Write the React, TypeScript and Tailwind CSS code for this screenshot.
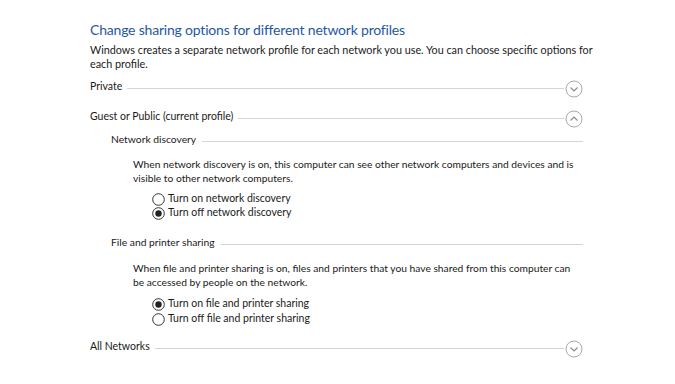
import React from "react";

const font = { fontFamily: 'Lato, "Noto Sans", sans-serif' };

function Chevron({ up }: { up?: boolean }) {
  return (
    <svg width="18" height="18" viewBox="0 0 18 18" className="shrink-0 mt-[3px]">
      <circle cx="9" cy="9" r="8" fill="none" stroke="#a8a8a8" strokeWidth="1" />
      {up ? (
        <path d="M5.5 10.5 L9 7 L12.5 10.5" fill="none" stroke="#8a8a8a" strokeWidth="1.1" />
      ) : (
        <path d="M5.5 7.5 L9 11 L12.5 7.5" fill="none" stroke="#8a8a8a" strokeWidth="1.1" />
      )}
    </svg>
  );
}

function SectionHeader({ label, up }: { label: string; up?: boolean }) {
  return (
    <div className="flex items-center h-[18px]">
      <span className="text-[10.5px] text-[#1a1a1a] whitespace-nowrap">{label}</span>
      <div className="flex-1 h-px bg-[#d4d4d4] ml-[5px] mr-[1px] mt-[3px]" />
      <Chevron up={up} />
    </div>
  );
}

function SubHeader({ label }: { label: string }) {
  return (
    <div className="flex items-center h-[16px]">
      <span className="text-[10.3px] text-[#1a1a1a] whitespace-nowrap">{label}</span>
      <div className="flex-1 h-px bg-[#d4d4d4] ml-[6px] mt-[3px]" />
    </div>
  );
}

function Radio({ checked, label }: { checked?: boolean; label: string }) {
  return (
    <div className="flex items-center h-[14px] gap-[3px]">
      <svg width="13" height="13" viewBox="0 0 13 13" className="shrink-0">
        <circle cx="6.5" cy="6.5" r="5.8" fill="#fff" stroke="#333" strokeWidth="1" />
        {checked && <circle cx="6.5" cy="6.5" r="3.2" fill="#222" />}
      </svg>
      <span className="text-[10.5px] text-[#1a1a1a]">{label}</span>
    </div>
  );
}

export default function App() {
  return (
    <div className="w-[675px] h-[384px] bg-white overflow-hidden" style={font}>
      <div className="pl-[90px] pr-[92px] pt-[20px]">
        <div className="text-[14px] tracking-[-0.2px] text-[#1e58a6] leading-[20px] whitespace-nowrap">
          Change sharing options for different network profiles
        </div>
        <div className="mt-[3px] text-[10.8px] leading-[14px] text-[#1a1a1a] whitespace-nowrap">
          Windows creates a separate network profile for each network you use. You can choose specific options for
          <br />
          each profile.
        </div>
        <div className="mt-[7px]">
          <SectionHeader label="Private" />
        </div>
        <div className="mt-[12px]">
          <SectionHeader label="Guest or Public (current profile)" up />
        </div>
        <div className="pl-[21px] mt-[6px]">
          <SubHeader label="Network discovery" />
          <div className="pl-[22px] mt-[9px] text-[10.25px] leading-[14px] text-[#1a1a1a] whitespace-nowrap">
            When network discovery is on, this computer can see other network computers and devices and is
            <br />
            visible to other network computers.
          </div>
          <div className="pl-[41px] mt-[7px] flex flex-col">
            <Radio label="Turn on network discovery" />
            <Radio checked label="Turn off network discovery" />
          </div>
          <div className="mt-[15px]">
            <SubHeader label="File and printer sharing" />
          </div>
          <div className="pl-[22px] mt-[10px] text-[10.25px] leading-[14px] text-[#1a1a1a] whitespace-nowrap">
            When file and printer sharing is on, files and printers that you have shared from this computer can
            <br />
            be accessed by people on the network.
          </div>
          <div className="pl-[41px] mt-[8px] flex flex-col gap-[1px]">
            <Radio checked label="Turn on file and printer sharing" />
            <Radio label="Turn off file and printer sharing" />
          </div>
        </div>
        <div className="mt-[12px]">
          <SectionHeader label="All Networks" />
        </div>
      </div>
    </div>
  );
}
